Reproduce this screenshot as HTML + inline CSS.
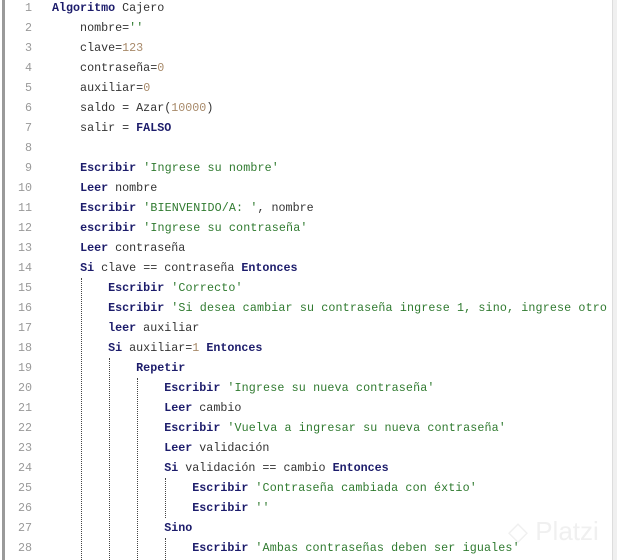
<!DOCTYPE html>
<html><head><meta charset="utf-8"><style>
html,body{margin:0;padding:0;background:#fff;width:617px;height:560px;overflow:hidden;position:relative}
body{font-family:"Liberation Mono","DejaVu Sans Mono",monospace;font-size:11.7px;color:#333}
.lb{position:absolute;left:2px;top:0;width:3px;height:560px;background:#9a9a9a}
.rb{position:absolute;left:612px;top:0;width:5px;height:560px;background:#f0f0f0;border-left:1px solid #ddd}
.l{position:absolute;left:0;height:20px;line-height:20px;white-space:pre;width:612px}
.n{position:absolute;left:0;width:32px;text-align:right;color:#999}
.c{position:absolute;left:52px}
.k{color:#1c1c6b;font-weight:bold}
.s{color:#2f7a2f;letter-spacing:0.13px}
.d{color:#a88a6a}
.g{position:absolute;width:0;border-left:1px dotted #444}
.wm{position:absolute;left:508px;top:516px;font-family:"Liberation Sans",sans-serif;font-size:26px;color:#f0f0f0}
</style></head><body>
<div class="lb"></div><div class="rb"></div>
<div class="g" style="left:81px;top:278px;height:282px"></div>
<div class="g" style="left:109px;top:358px;height:202px"></div>
<div class="g" style="left:137px;top:378px;height:182px"></div>
<div class="g" style="left:165px;top:478px;height:40px"></div>
<div class="g" style="left:165px;top:538px;height:22px"></div>
<div class="wm">◇ Platzi</div>
<div class="l" style="top:-2px"><span class="n">1</span><span class="c"><span class="k">Algoritmo</span> Cajero</span></div>
<div class="l" style="top:18px"><span class="n">2</span><span class="c">    nombre=<span class="s">''</span></span></div>
<div class="l" style="top:38px"><span class="n">3</span><span class="c">    clave=<span class="d">123</span></span></div>
<div class="l" style="top:58px"><span class="n">4</span><span class="c">    contraseña=<span class="d">0</span></span></div>
<div class="l" style="top:78px"><span class="n">5</span><span class="c">    auxiliar=<span class="d">0</span></span></div>
<div class="l" style="top:98px"><span class="n">6</span><span class="c">    saldo = Azar(<span class="d">10000</span>)</span></div>
<div class="l" style="top:118px"><span class="n">7</span><span class="c">    salir = <span class="k">FALSO</span></span></div>
<div class="l" style="top:138px"><span class="n">8</span></div>
<div class="l" style="top:158px"><span class="n">9</span><span class="c">    <span class="k">Escribir</span> <span class="s">'Ingrese su nombre'</span></span></div>
<div class="l" style="top:178px"><span class="n">10</span><span class="c">    <span class="k">Leer</span> nombre</span></div>
<div class="l" style="top:198px"><span class="n">11</span><span class="c">    <span class="k">Escribir</span> <span class="s">'BIENVENIDO/A: '</span>, nombre</span></div>
<div class="l" style="top:218px"><span class="n">12</span><span class="c">    <span class="k">escribir</span> <span class="s">'Ingrese su contraseña'</span></span></div>
<div class="l" style="top:238px"><span class="n">13</span><span class="c">    <span class="k">Leer</span> contraseña</span></div>
<div class="l" style="top:258px"><span class="n">14</span><span class="c">    <span class="k">Si</span> clave == contraseña <span class="k">Entonces</span></span></div>
<div class="l" style="top:278px"><span class="n">15</span><span class="c">        <span class="k">Escribir</span> <span class="s">'Correcto'</span></span></div>
<div class="l" style="top:298px"><span class="n">16</span><span class="c">        <span class="k">Escribir</span> <span class="s">'Si desea cambiar su contraseña ingrese 1, sino, ingrese otro</span></span></div>
<div class="l" style="top:318px"><span class="n">17</span><span class="c">        <span class="k">leer</span> auxiliar</span></div>
<div class="l" style="top:338px"><span class="n">18</span><span class="c">        <span class="k">Si</span> auxiliar=<span class="d">1</span> <span class="k">Entonces</span></span></div>
<div class="l" style="top:358px"><span class="n">19</span><span class="c">            <span class="k">Repetir</span></span></div>
<div class="l" style="top:378px"><span class="n">20</span><span class="c">                <span class="k">Escribir</span> <span class="s">'Ingrese su nueva contraseña'</span></span></div>
<div class="l" style="top:398px"><span class="n">21</span><span class="c">                <span class="k">Leer</span> cambio</span></div>
<div class="l" style="top:418px"><span class="n">22</span><span class="c">                <span class="k">Escribir</span> <span class="s">'Vuelva a ingresar su nueva contraseña'</span></span></div>
<div class="l" style="top:438px"><span class="n">23</span><span class="c">                <span class="k">Leer</span> validación</span></div>
<div class="l" style="top:458px"><span class="n">24</span><span class="c">                <span class="k">Si</span> validación == cambio <span class="k">Entonces</span></span></div>
<div class="l" style="top:478px"><span class="n">25</span><span class="c">                    <span class="k">Escribir</span> <span class="s">'Contraseña cambiada con éxtio'</span></span></div>
<div class="l" style="top:498px"><span class="n">26</span><span class="c">                    <span class="k">Escribir</span> <span class="s">''</span></span></div>
<div class="l" style="top:518px"><span class="n">27</span><span class="c">                <span class="k">Sino</span></span></div>
<div class="l" style="top:538px"><span class="n">28</span><span class="c">                    <span class="k">Escribir</span> <span class="s">'Ambas contraseñas deben ser iguales'</span></span></div>
</body></html>
